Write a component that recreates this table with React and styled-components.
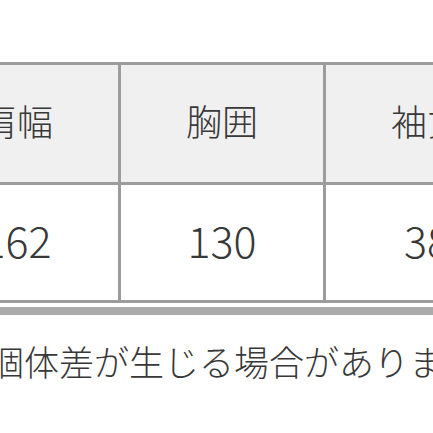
import styled, { createGlobalStyle } from "styled-components";

const GlobalStyle = createGlobalStyle`
  html, body {
    margin: 0;
    padding: 0;
    background: #fff;
    overflow: hidden;
  }
  body {
    font-family: "Noto Sans CJK JP", "Noto Sans", sans-serif;
    color: #383838;
  }
`;

const Page = styled.div`
  width: 433px;
  height: 433px;
  overflow: hidden;
  padding-top: 62px;
  box-sizing: border-box;
`;

const Table = styled.div`
  display: grid;
  grid-template-columns: repeat(3, 202px);
  grid-template-rows: 117px 115px;
  gap: 3px;
  padding: 3px;
  width: max-content;
  margin-left: -87px;
  background: #9c9c9c;
`;

const Cell = styled.div`
  display: flex;
  align-items: center;
  justify-content: center;
  padding-bottom: 7px;
  box-sizing: border-box;
  background: ${(p) => (p.$head ? "#f0f0f0" : "#fff")};
  font-size: ${(p) => (p.$head ? "36px" : "43px")};
  font-weight: 300;
  color: #383838;
  white-space: nowrap;
`;

const ScrollBar = styled.div`
  height: 8px;
  margin-top: 4px;
  background: #aaa;
`;

const Note = styled.p`
  margin: 20px 0 0 -11px;
  font-size: 35px;
  font-weight: 300;
  line-height: 52px;
  white-space: nowrap;
  color: #383838;
`;

const heads = ["肩幅", "胸囲", "袖丈"];
const values = ["162", "130", "38"];

export default function App() {
  return (
    <>
      <GlobalStyle />
      <Page>
        <Table>
          {heads.map((h) => (
            <Cell key={h} $head>
              {h}
            </Cell>
          ))}
          {values.map((v, i) => (
            <Cell key={i}>{v}</Cell>
          ))}
        </Table>
        <ScrollBar />
        <Note>個体差が生じる場合があります。</Note>
      </Page>
    </>
  );
}
